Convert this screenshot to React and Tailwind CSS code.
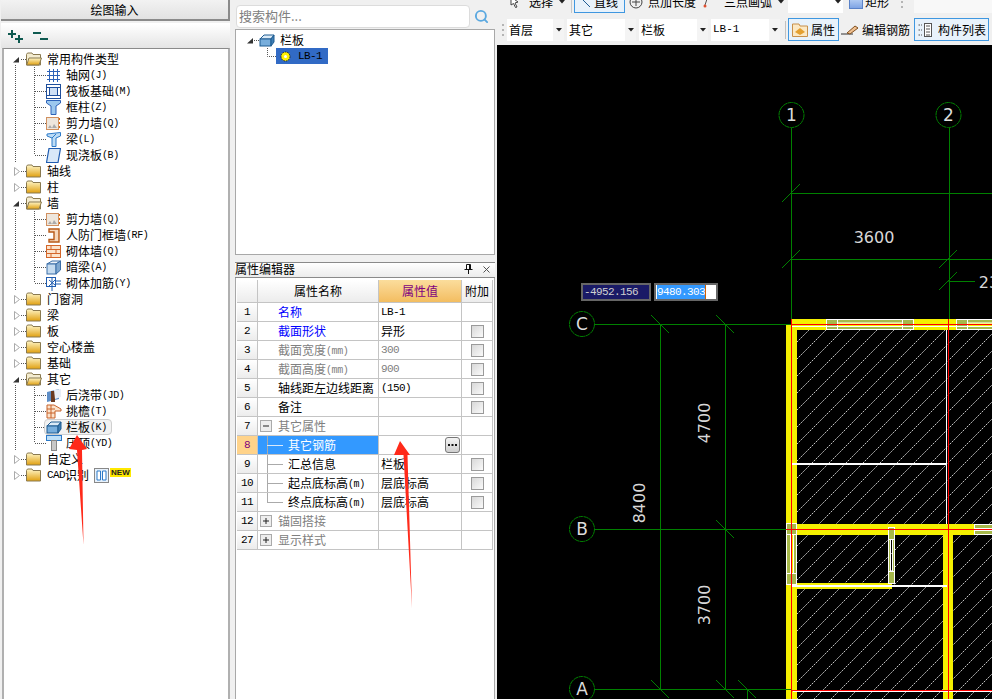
import React from 'react';
import { Search, X } from 'lucide-react';

const mono = "font-['Liberation_Mono','Noto_Sans_CJK_SC',monospace]";

// small tree / toolbar icons
const Folder = ({ open }) => (
  <svg width="16" height="14" viewBox="0 0 16 14">
    <defs>
      <linearGradient id="fold" x1="0" y1="0" x2="0" y2="1">
        <stop offset="0" stopColor="#fff6c8" />
        <stop offset="1" stopColor="#e0a010" />
      </linearGradient>
    </defs>
    <path d="M0.5 2.5 L1.5 1 H6 L7 2.5 H14.5 V13 H0.5 Z" fill={open ? '#f4ecd0' : 'url(#fold)'} stroke="#8a7a50" />
    {open && <path d="M3 6 H15.5 L13 13 H0.7 Z" fill="url(#fold)" stroke="#8a7a50" />}
  </svg>
);

const TreeIcon = ({ name }) => {
  if (name === 'grid') {
    return (
      <svg width="15" height="15" viewBox="0 0 15 15" fill="none" stroke="#2d62b8">
        <path d="M3.5 1V14M7.5 1V14M11.5 1V14M1 3.5H14M1 7.5H14M1 11.5H14" />
      </svg>
    );
  }
  if (name === 'raft') {
    return (
      <svg width="15" height="15" viewBox="0 0 15 15" fill="none" stroke="#1f4f9c">
        <rect x="0.5" y="0.5" width="14" height="14" />
        <rect x="3.5" y="3.5" width="8" height="8" fill="#cfe0f5" />
        <path d="M0.5 3.5H3M12 3.5H14.5M0.5 11.5H3M12 11.5H14.5" />
      </svg>
    );
  }
  if (name === 'col') {
    return (
      <svg width="15" height="15" viewBox="0 0 15 15">
        <path d="M0.5 0.5H14.5V3L10 6V14.5H5V6L0.5 3Z" fill="#9cc8ee" stroke="#2d62b8" />
      </svg>
    );
  }
  if (name === 'wall') {
    return (
      <svg width="15" height="15" viewBox="0 0 15 15">
        <rect x="0.5" y="1.5" width="12" height="12" fill="#eee6dc" stroke="#d09060" />
        <path d="M2 12L4 9L6 12L8 8L11 12Z" fill="#aaa" />
        <path d="M13.5 2V13" stroke="#d86a10" strokeDasharray="2 2" />
      </svg>
    );
  }
  if (name === 'beam') {
    return (
      <svg width="15" height="15" viewBox="0 0 15 15" fill="#bcdcf6" stroke="#2d7ac8">
        <path d="M1 2L14.5 0.5V4L10 6V14.5H6V6L1 4Z" />
        <path d="M6 6L10 2" />
      </svg>
    );
  }
  if (name === 'slab') {
    return (
      <svg width="15" height="15" viewBox="0 0 15 15">
        <path d="M3 0.5H14.5L12 14.5H0.5Z" fill="#d8e8f8" stroke="#1f5cb0" strokeWidth="1.2" />
      </svg>
    );
  }
  if (name === 'door') {
    return (
      <svg width="15" height="15" viewBox="0 0 15 15" fill="#f6d8bc" stroke="#b85a18">
        <path d="M3 1H13V14H3V11.5H8V4H3Z" strokeWidth="1.4" />
      </svg>
    );
  }
  if (name === 'brick') {
    return (
      <svg width="15" height="15" viewBox="0 0 15 15" fill="#fbe3cc" stroke="#d4662a">
        <rect x="0.5" y="1.5" width="14" height="12" />
        <path d="M0.5 5.5H14.5M0.5 9.5H14.5M5 1.5V5.5M10 5.5V9.5M5 9.5V13.5" />
      </svg>
    );
  }
  if (name === 'hidden') {
    return (
      <svg width="15" height="15" viewBox="0 0 15 15" stroke="#3a6ea8">
        <path d="M1 4L6 1H14.5L10 4Z" fill="#eef4fa" />
        <rect x="1" y="4" width="9" height="10" fill="#c6dcf0" />
        <path d="M10 4L14.5 1V10L10 14Z" fill="#7fa8d0" />
      </svg>
    );
  }
  if (name === 'rebar') {
    return (
      <svg width="15" height="15" viewBox="0 0 15 15" fill="none" stroke="#1f5cb0">
        <rect x="0.5" y="1.5" width="9" height="9" />
        <path d="M3 4L9 9M3 10L10 3M6 1V15M10 5H15M10 8H15" />
      </svg>
    );
  }
  if (name === 'post') {
    return (
      <svg width="16" height="15" viewBox="0 0 16 15">
        <path d="M1 4L13 1V11L1 14Z" fill="#5f8fc8" />
        <path d="M5 3H9V14H5Z" fill="#6a3a20" />
        <path d="M8 2L15 1V9L9 11Z" fill="#e8eef6" />
      </svg>
    );
  }
  if (name === 'eave') {
    return (
      <svg width="16" height="15" viewBox="0 0 16 15" fill="#fbe3cc" stroke="#c8622a">
        <path d="M1 1H8L15 5V7H9V14H1Z" />
        <path d="M1 5H9M1 9H9M5 1V14" fill="none" />
      </svg>
    );
  }
  if (name === 'rail') return <RailIcon />;
  if (name === 'coping') {
    return (
      <svg width="16" height="16" viewBox="0 0 16 16">
        <rect x="0.5" y="0.5" width="15" height="5" fill="#bfe0f8" stroke="#2d7ac8" />
        <rect x="5.5" y="5.5" width="5" height="10" fill="#c8c8c8" stroke="#888" />
      </svg>
    );
  }
  return null;
};

const RailIcon = () => (
  <svg width="16" height="14" viewBox="0 0 16 14" stroke="#1f5c92">
    <path d="M1 6L5 2H15L12 6Z" fill="#dbeaf6" />
    <rect x="1" y="6" width="11" height="7" fill="#78aedc" />
    <path d="M12 6L15 2V9L12 13Z" fill="#3f7eb4" />
  </svg>
);

// dotted connectors left of a tree row
const Gutter = ({ kind, last, state }) => {
  if (kind === 'child') {
    return (
      <svg width="42" height="16" viewBox="4 0 42 16" className="shrink-0" fill="none" stroke="#555" strokeDasharray="1 1">
        <path d="M15.5 0V16" />
        <path d={`M34.5 0V${last ? 8 : 16}`} />
        <path d="M35 8.5H46" />
      </svg>
    );
  }
  return (
    <svg width="22" height="16" viewBox="4 0 22 16" className="shrink-0">
      <path d="M21 8.5H26" stroke="#555" strokeDasharray="1 1" fill="none" />
      {state === 'open' ? (
        <path d="M13 11.5H19V6Z" fill="#333" />
      ) : (
        <path d="M14.5 4.5V12.5L19.5 8.5Z" fill="#fff" stroke="#aaa" />
      )}
      {state === 'open' && <path d="M15.5 14V16" stroke="#555" strokeDasharray="1 1" />}
    </svg>
  );
};

const treeRows = [
  { label: '常用构件类型', state: 'open' },
  { label: '轴网', key2: '(J)', icon: 'grid' },
  { label: '筏板基础', key2: '(M)', icon: 'raft' },
  { label: '框柱', key2: '(Z)', icon: 'col' },
  { label: '剪力墙', key2: '(Q)', icon: 'wall' },
  { label: '梁', key2: '(L)', icon: 'beam' },
  { label: '现浇板', key2: '(B)', icon: 'slab', last: true },
  { label: '轴线' },
  { label: '柱' },
  { label: '墙', state: 'open' },
  { label: '剪力墙', key2: '(Q)', icon: 'wall' },
  { label: '人防门框墙', key2: '(RF)', icon: 'door' },
  { label: '砌体墙', key2: '(Q)', icon: 'brick' },
  { label: '暗梁', key2: '(A)', icon: 'hidden' },
  { label: '砌体加筋', key2: '(Y)', icon: 'rebar', last: true },
  { label: '门窗洞' },
  { label: '梁' },
  { label: '板' },
  { label: '空心楼盖' },
  { label: '基础' },
  { label: '其它', state: 'open' },
  { label: '后浇带', key2: '(JD)', icon: 'post' },
  { label: '挑檐', key2: '(T)', icon: 'eave' },
  { label: '栏板', key2: '(K)', icon: 'rail', hot: true },
  { label: '压顶', key2: '(YD)', icon: 'coping', last: true },
  { label: '自定义' },
  { label: '识别', prefix: 'CAD', isNew: true },
];

const TreeRow = ({ row }) => {
  if (row.icon) {
    return (
      <div className="flex h-4 items-center">
        <Gutter kind="child" last={row.last} />
        <div className={`flex h-4 items-center pr-1 ${row.hot ? '-ml-[2px] rounded-sm border border-[#cfcfcf] bg-[#f2f2f2] pl-px' : ''}`}>
          <span className="flex w-[20px] shrink-0 items-center">
            <TreeIcon name={row.icon} />
          </span>
          <span className="text-[12px] leading-4">{row.label}</span>
          <span className={`${mono} mt-[2px] text-[10px] leading-4 tracking-[-0.4px]`}>{row.key2}</span>
        </div>
      </div>
    );
  }
  return (
    <div className="flex h-4 items-center">
      <Gutter state={row.state} />
      <span className="flex w-[21px] shrink-0 items-center">
        <Folder open={row.state === 'open'} />
      </span>
      {row.prefix && <span className={`${mono} text-[11px] leading-4 tracking-[-0.6px]`}>{row.prefix}</span>}
      <span className="text-[12px] leading-4">{row.label}</span>
      {row.isNew && (
        <div className="ml-[5px] flex items-start">
          <svg width="15" height="15" viewBox="0 0 15 15">
            <rect x="0.5" y="0.5" width="14" height="14" fill="#e8f2fc" stroke="#888" />
            <path d="M3 3H6.5V12H3ZM8.5 3H12V12H8.5Z" fill="#fff" stroke="#2d7ac8" />
          </svg>
          <span className="ml-px bg-[#ffe800] px-px text-[8px] font-bold leading-[9px] text-[#222] font-['Liberation_Sans',sans-serif]">NEW</span>
        </div>
      )}
    </div>
  );
};

const LeftPanel = () => (
  <div className="flex h-full w-[230px] shrink-0 flex-col pl-px">
    <div className="flex h-[21px] items-center justify-center border-r-2 border-b-2 border-[#8a8a8a] bg-gradient-to-b from-[#f2f2f2] to-[#e2e2e2] text-[12px]">
      绘图输入
    </div>
    <div className="mt-[2px] flex h-[25px] items-center gap-2 border-t border-white bg-gradient-to-b from-white to-[#e4e4e4] pl-[6px]">
      <svg width="17" height="15" viewBox="0 0 17 15" stroke="#0f5a50" strokeWidth="2">
        <path d="M5 1V9M1 5H9M12 6V14M8 10H16" />
      </svg>
      <svg width="17" height="15" viewBox="0 0 17 15" stroke="#0f5a50" strokeWidth="2">
        <path d="M1 4H9M8 10H16" />
      </svg>
    </div>
    <div className="ml-px min-h-0 flex-1 border-x-2 border-t border-x-[#b0b0b0] border-t-[#8a8a8a] bg-white pt-[2px]">
      {treeRows.map((row, i) => (
        <TreeRow key={i} row={row} />
      ))}
    </div>
  </div>
);

const Check = () => (
  <span className="block h-[13px] w-[13px] border border-[#9a9a9a] bg-gradient-to-br from-[#d8d8d8] to-[#fafafa]" />
);

const Expander = ({ open }) => (
  <svg width="20" height="18" className="shrink-0">
    <rect x="2.5" y="3.5" width="11" height="11" fill="#eee" stroke="#aaa" />
    <path d={open ? 'M5 9H11' : 'M5 9H11M8 6V12'} stroke="#222" />
  </svg>
);

const Branch = ({ last, white }) => (
  <svg width="30" height="18" className="shrink-0" fill="none" stroke={white ? '#d8e8fa' : '#aaa'}>
    <path d={`M9.5 0V${last ? 9 : 18}`} stroke="#aaa" />
    <path d="M9 9.5H25" />
  </svg>
);

const propRows = [
  { no: '1', name: '名称', value: 'LB-1', color: 'text-[#0000ff]', latin: true, noCheck: true },
  { no: '2', name: '截面形状', value: '异形', color: 'text-[#0000ff]' },
  { no: '3', name: '截面宽度', unit: '(mm)', value: '300', color: 'text-[#808080]', latin: true, dim: true },
  { no: '4', name: '截面高度', unit: '(mm)', value: '900', color: 'text-[#808080]', latin: true, dim: true },
  { no: '5', name: '轴线距左边线距离', value: '(150)', latin: true },
  { no: '6', name: '备注', value: '' },
  { no: '7', name: '其它属性', value: '', color: 'text-[#808080]', expander: 'open', noCheck: true },
  { no: '8', name: '其它钢筋', value: '', branch: true, active: true, noCheck: true },
  { no: '9', name: '汇总信息', value: '栏板', branch: true },
  { no: '10', name: '起点底标高', unit: '(m)', value: '层底标高', branch: true },
  { no: '11', name: '终点底标高', unit: '(m)', value: '层底标高', branch: true, last: true },
  { no: '12', name: '锚固搭接', value: '', color: 'text-[#808080]', expander: 'closed', noCheck: true },
  { no: '27', name: '显示样式', value: '', color: 'text-[#808080]', expander: 'closed', noCheck: true },
];

const cell = 'flex items-center border-r border-b border-[#c4c4c4]';

const PropGrid = () => (
  <div className="grid grid-cols-[21px_121px_83px_31px] text-[12px]">
    <div className={`${cell} h-[23px] bg-gradient-to-b from-white to-[#ececec]`} />
    <div className={`${cell} h-[23px] justify-center bg-gradient-to-b from-white to-[#ececec]`}>属性名称</div>
    <div className={`${cell} h-[23px] justify-center bg-gradient-to-b from-[#fbdd9c] to-[#f3bd60] text-[#800080]`}>属性值</div>
    <div className={`${cell} h-[23px] justify-center bg-gradient-to-b from-white to-[#ececec]`}>附加</div>
    {propRows.map((r) => (
      <React.Fragment key={r.no}>
        <div className={`${cell} ${mono} h-[19px] justify-center text-[11px] tracking-[-0.6px] ${r.active ? 'bg-[#ffd38a] text-[#800080]' : 'bg-gradient-to-b from-white to-[#ececec]'}`}>
          {r.no}
        </div>
        <div className={`${cell} h-[19px] whitespace-nowrap ${r.active ? 'bg-[#3399ff] text-white' : r.color || ''} ${r.expander || r.branch ? '' : 'pl-[20px]'}`}>
          {r.expander && <Expander open={r.expander === 'open'} />}
          {r.branch && <Branch last={r.last} white={r.active} />}
          {r.name}
          {r.unit && <span className={`${mono} mt-[2px] text-[10px] tracking-[-0.4px]`}>{r.unit}</span>}
        </div>
        <div className={`${cell} h-[19px] pl-[2px] pr-px ${r.dim ? 'text-[#808080]' : ''} ${r.latin ? `${mono} text-[11px] tracking-[-0.6px]` : ''}`}>
          {r.value}
          {r.active && (
            <span className="ml-auto flex h-[16px] w-[15px] items-center justify-center rounded-[3px] border border-[#777] bg-gradient-to-b from-[#f4f4f4] to-[#cfcfcf]">
              <svg width="9" height="2" fill="#111">
                <rect width="2" height="2" />
                <rect x="3.5" width="2" height="2" />
                <rect x="7" width="2" height="2" />
              </svg>
            </span>
          )}
        </div>
        <div className={`${cell} h-[19px] justify-center`}>{!r.noCheck && <Check />}</div>
      </React.Fragment>
    ))}
  </div>
);

const MiddlePanel = () => (
  <div className="ml-[5px] flex h-full w-[260px] shrink-0 flex-col">
    <div className="flex h-[29px] items-start pt-[5px]">
      <div className="ml-px flex h-[23px] w-[234px] items-center rounded-sm border border-[#dcdcdc] bg-white pb-px pl-[2px] text-[13px] text-[#808080]">
        搜索构件...
      </div>
      <Search size={15} strokeWidth={3} className="ml-[4px] mt-[4px] text-[#5aa8e0]" />
    </div>
    <div className="h-[226px] border border-[#a8a8a8] bg-white pl-[10px] pt-[2px]">
      <div className="flex h-4 items-center">
        <svg width="13" height="16" className="shrink-0">
          <path d="M1 11.5H7V6Z" fill="#333" />
          <path d="M8 8.5H13" stroke="#555" strokeDasharray="1 1" />
        </svg>
        <span className="flex w-[21px] shrink-0 items-center">
          <RailIcon />
        </span>
        <span className="text-[12px] leading-4">栏板</span>
      </div>
      <div className="flex h-4 items-center">
        <svg width="30" height="16" className="shrink-0" fill="none" stroke="#555" strokeDasharray="1 1">
          <path d="M21.5 0V8.5H30" />
        </svg>
        <div className={`flex h-4 w-[52px] items-center gap-[7px] bg-[#316ac5] pl-1 ${mono} text-[11px] tracking-[-0.6px]`}>
          <svg width="11" height="11" viewBox="0 0 11 11" className="shrink-0">
            <circle cx="5.5" cy="5.5" r="4.5" fill="#fff200" stroke="#222" strokeDasharray="1.5 1" />
            <circle cx="5.5" cy="5.5" r="1.5" fill="#fff" />
          </svg>
          LB-1
        </div>
      </div>
    </div>
    <div className="mt-[7px] flex h-[16px] items-center justify-between border-y border-[#8a8a8a] bg-gradient-to-b from-white to-[#ececec] pb-[2px] pr-[3px] text-[12px]">
      属性编辑器
      <div className="flex items-center gap-[8px]">
        <svg width="9" height="10" viewBox="0 0 9 10" stroke="#111" fill="none">
          <path d="M2.5 0.5H6.5V5.5H2.5ZM0.5 5.5H8.5M4.5 5.5V10M5.5 1V5" />
        </svg>
        <X size={11} className="text-[#444]" />
      </div>
    </div>
    <div className="min-h-0 flex-1 border-x border-[#a8a8a8] bg-white pl-px pt-[2px]">
      <PropGrid />
    </div>
  </div>
);

const Grip = () => (
  <svg width="3" height="14" className="shrink-0" fill="#b4b4b4">
    <rect y="1" width="2" height="2" />
    <rect y="6" width="2" height="2" />
    <rect y="11" width="2" height="2" />
  </svg>
);

const Caret = () => (
  <svg width="6" height="4" className="shrink-0">
    <path d="M0 0H6L3 3.5Z" fill="#222" />
  </svg>
);

const Select = ({ label, w, latin }) => (
  <div className={`flex h-[22px] items-center justify-between bg-white pl-[2px] ${w} ${latin ? `${mono} text-[11px]` : 'text-[12px]'}`}>
    {label}
    <span className="flex h-full w-[11px] items-center justify-center bg-[#f4f4f4]">
      <Caret />
    </span>
  </div>
);

// only the lower edge of this bar is in the picture, the text is cut as in the reference
const TopToolbar = () => (
  <div className="h-[14px] overflow-hidden bg-[#f0f0f0]">
    <div className="-mt-[9px] flex h-[22px] items-center whitespace-nowrap text-[12px]">
      <svg width="10" height="12" viewBox="0 0 10 12" className="ml-[13px] shrink-0" fill="#fff" stroke="#444">
        <path d="M1 1L8 6L5 7L7 11L5.500 11.500L3.500 7.500L1 9Z" />
      </svg>
      <span className="ml-[9px]">选择</span>
      <span className="ml-[6px]"><Caret /></span>
      <span className="ml-[6px] h-full w-px bg-[#c8c8c8]" />
      <div className="ml-[2px] flex h-full w-[51px] items-center border border-[#3f97e0] bg-[#e8f2fb] pl-1">
        <svg width="12" height="12" className="shrink-0" fill="none" stroke="#1f5c92">
          <path d="M1 1L11 11" />
        </svg>
        <span className="ml-[3px]">直线</span>
      </div>
      <svg width="14" height="14" viewBox="0 0 14 14" className="ml-[4px] shrink-0" fill="none" stroke="#444">
        <circle cx="7" cy="7" r="6" />
        <path d="M7 3V11M3 7H11" />
      </svg>
      <span className="ml-[5px]">点加长度</span>
      <svg width="6" height="14" className="ml-[7px] shrink-0" fill="none">
        <path d="M4 4L2 10" stroke="#555" />
        <circle cx="2" cy="11" r="1.500" fill="#e05030" />
      </svg>
      <span className="ml-[15px]">三点画弧</span>
      <span className="ml-[6px]"><Caret /></span>
      <span className="ml-[4px] flex h-full w-[55px] shrink-0 items-center justify-end bg-white pr-[2px]"><Caret /></span>
      <span className="ml-[6px] h-[14px] w-[14px] shrink-0 border border-[#5a82c8] bg-gradient-to-b from-[#c8dcf8] to-[#7fa4e4]" />
      <span className="ml-[2px]">矩形</span>
      <span className="ml-[12px]"><Grip /></span>
      <span className="ml-[10px] h-full flex-1 bg-[#f8f8f8]" />
    </div>
  </div>
);

const SubToolbar = () => (
  <div className="mt-[2px] flex h-[29px] items-center whitespace-nowrap bg-[#f0f0f0] pb-[2px] pl-[5px] text-[12px]">
    <Grip />
    <div className="ml-[2px]"><Select label="首层" w="w-[57px]" /></div>
    <div className="ml-[3px]"><Select label="其它" w="w-[69px]" /></div>
    <div className="ml-[3px]"><Select label="栏板" w="w-[69px]" /></div>
    <div className="ml-[3px]"><Select label="LB-1" w="w-[69px]" latin /></div>
    <span className="ml-[5px] h-[18px] w-px bg-[#c0c0c0]" />
    <div className="ml-[2px] flex h-[23px] w-[51px] items-center gap-[3px] border border-[#3f97e0] bg-[#e8f2fb] pl-[3px]">
      <svg width="16" height="14" viewBox="0 0 16 14" className="shrink-0">
        <path d="M0.500 1H7L8 3H15.500V13.500H0.500Z" fill="#fbe8c4" stroke="#c8904a" />
        <path d="M3 9L8 5L13 9L8 12Z" fill="#e4a030" />
      </svg>
      属性
    </div>
    <svg width="20" height="14" viewBox="0 0 20 14" className="ml-[2px] shrink-0" fill="none">
      <path d="M0 11H12" stroke="#333" />
      <path d="M6 10L14 3L17 5L9 11Z" fill="#f0c090" stroke="#805020" />
    </svg>
    <span className="ml-px">编辑钢筋</span>
    <div className="ml-[4px] flex h-[23px] w-[75px] items-center gap-[5px] border border-[#3f97e0] bg-[#e8f2fb] pl-[3px]">
      <svg width="15" height="14" viewBox="0 0 15 14" className="shrink-0" fill="none" stroke="#555">
        <path d="M0.500 2H4M0.500 7H4M0.500 12H4" strokeDasharray="1.500 1" />
        <rect x="6.500" y="0.500" width="7" height="13" fill="#fff" />
        <path d="M8 3H12M8 6H12M8 9H12M8 12H12" />
      </svg>
      构件列表
    </div>
  </div>
);

// olive rebar strip with white outline
const Strip = ({ x, y, w, h }) => <rect x={x} y={y} width={w} height={h} fill="#a6b84a" stroke="#fff" />;

const Tick = ({ x, y, up }) =>
  up ? (
    <path d={`M${x - 9} ${y + 9}L${x + 9} ${y - 9}`} />
  ) : (
    <path d={`M${x - 9} ${y - 9}L${x + 9} ${y + 9}`} />
  );

const Axis = ({ x, y, label }) => (
  <>
    <circle cx={x} cy={y} r="12.500" fill="none" stroke="#008000" strokeDasharray="5 0.500" />
    <text x={x} y={y + 6} textAnchor="middle" fontSize="17" fill="#dcdcdc">{label}</text>
  </>
);

const DimText = ({ x, y, children, rotate }) => (
  <text
    x={x}
    y={y}
    textAnchor="middle"
    fontSize="16"
    fill="#d8d8d8"
    transform={rotate ? `rotate(-90 ${x} ${y})` : undefined}
  >
    {children}
  </text>
);

const Drawing = () => (
  <svg viewBox="497 45 495 654" className="block h-full w-full font-['DejaVu_Sans',sans-serif]">
    <defs>
      <pattern id="hatch" width="17" height="17" patternUnits="userSpaceOnUse">
        <path d="M0 17L17 0" stroke="#c4c4c4" strokeDasharray="2 1" />
      </pattern>
    </defs>
    <rect x="797" y="330" width="195" height="369" fill="url(#hatch)" />

    {/* walls */}
    <g fill="#f4f000">
      <rect x="792" y="319" width="200" height="11" />
      <rect x="786" y="325" width="11" height="374" />
      <rect x="786" y="524" width="188" height="11" />
      <rect x="943" y="535" width="10" height="164" />
      <rect x="792" y="583" width="100" height="6" />
    </g>

    {/* rebar strips */}
    <Strip x={826.5} y={319.5} w={11} h={10} />
    <Strip x={837.5} y={319.5} w={65} h={3.5} />
    <Strip x={837.5} y={326.5} w={65} h={3} />
    <Strip x={902.5} y={319.5} w={11} h={10} />
    <Strip x={956.5} y={319.5} w={11} h={10} />
    <Strip x={967.5} y={319.5} w={25} h={3.5} />
    <Strip x={967.5} y={326.5} w={25} h={3} />
    <Strip x={974.5} y={524.5} w={18} h={4} />
    <Strip x={974.5} y={530.5} w={18} h={4} />
    <Strip x={786.5} y={523.5} w={10} h={11} />
    <Strip x={786.5} y={534.5} w={4} h={39} />
    <Strip x={793.5} y={534.5} w={3} h={39} />
    <Strip x={786.5} y={573.5} w={10} h={11} />
    <Strip x={888.5} y={527.5} w={6} h={12} />
    <Strip x={888.5} y={539.5} w={2} h={32} />
    <Strip x={892.5} y={539.5} w={2} h={32} />
    <Strip x={888.5} y={571.5} w={6} h={12} />

    {/* white wall lines */}
    <g fill="#fff">
      <rect x="792" y="463" width="155" height="2" />
      <rect x="792" y="585" width="155" height="2" />
      <rect x="946" y="330" width="1" height="194" />
      <rect x="792" y="326" width="200" height="1" />
      <rect x="793" y="691" width="199" height="1" />
    </g>

    {/* axis and dimension lines */}
    <g stroke="#008000" fill="none">
      <path d="M791.500 128V319M949.500 128V319M791.500 692V699M948.500 692V699" />
      <path d="M791.500 193.500H992M791.500 259.500H992M948.500 281.500H975" />
      <path d="M595 324.500H791M595 529.500H786M595 689.500H792" />
      <path d="M660.500 324V689M725.500 324V689M747.500 689V699" />
      <Tick x={791} y={193} up />
      <Tick x={791} y={259} up />
      <Tick x={948} y={259} up />
      <Tick x={948} y={281} up />
      <Tick x={660} y={324} />
      <Tick x={725} y={324} />
      <Tick x={725} y={529} />
      <Tick x={660} y={689} />
      <Tick x={725} y={689} />
      <Tick x={747} y={689} />
    </g>

    {/* red centre lines */}
    <g stroke="#ff0000" fill="none">
      <path d="M791.500 319V699M948.500 319V699" />
      <path d="M792 324.500H992M786 529.500H992M792 690.500H992" />
    </g>

    <Axis x={791.5} y={115} label="1" />
    <Axis x={948.5} y={115} label="2" />
    <Axis x={582} y={324} label="C" />
    <Axis x={582} y={529} label="B" />
    <Axis x={582} y={689} label="A" />
    <DimText x={874} y={243}>3600</DimText>
    <DimText x={989} y={288}>23</DimText>
    <DimText x={645} y={503} rotate>8400</DimText>
    <DimText x={710} y={423} rotate>4700</DimText>
    <DimText x={710} y={605} rotate>3700</DimText>
  </svg>
);

const CadPanel = () => (
  <div className="ml-[2px] flex h-full min-w-0 flex-1 flex-col">
    <TopToolbar />
    <SubToolbar />
    <div className="relative min-h-0 flex-1 bg-black">
      <Drawing />
      <div className={`absolute left-[84px] top-[238px] flex h-[18px] w-[70px] items-center border-2 border-[#666] bg-[#1a1a66] pl-px text-[11px] tracking-[-0.6px] text-[#d0d0d0] ${mono}`}>
        -4952.156
      </div>
      <div className={`absolute left-[157px] top-[238px] flex h-[18px] w-[64px] items-center border-2 border-[#666] bg-white pl-px text-[11px] tracking-[-0.6px] text-white ${mono}`}>
        <span className="bg-[#3399ff] leading-[14px]">9480.303</span>
        <span className="h-[14px] w-px bg-[#d06000]" />
      </div>
    </div>
  </div>
);

const App = () => (
  <div className="relative flex h-[699px] w-[992px] overflow-hidden bg-[#f0f0f0] text-black font-['Noto_Sans_CJK_SC','Liberation_Sans',sans-serif]">
    <LeftPanel />
    <MiddlePanel />
    <CadPanel />

    {/* red annotation arrows */}
    <svg className="pointer-events-none absolute inset-0" width="992" height="699" fill="#ff2a1a">
      <path d="M77 435L87 449L82 450L83.500 545L77 450L69 449Z" />
      <path d="M400 441L410 455L407.500 455L412 608L403.500 455L394 455Z" />
    </svg>
  </div>
);

export default App;
